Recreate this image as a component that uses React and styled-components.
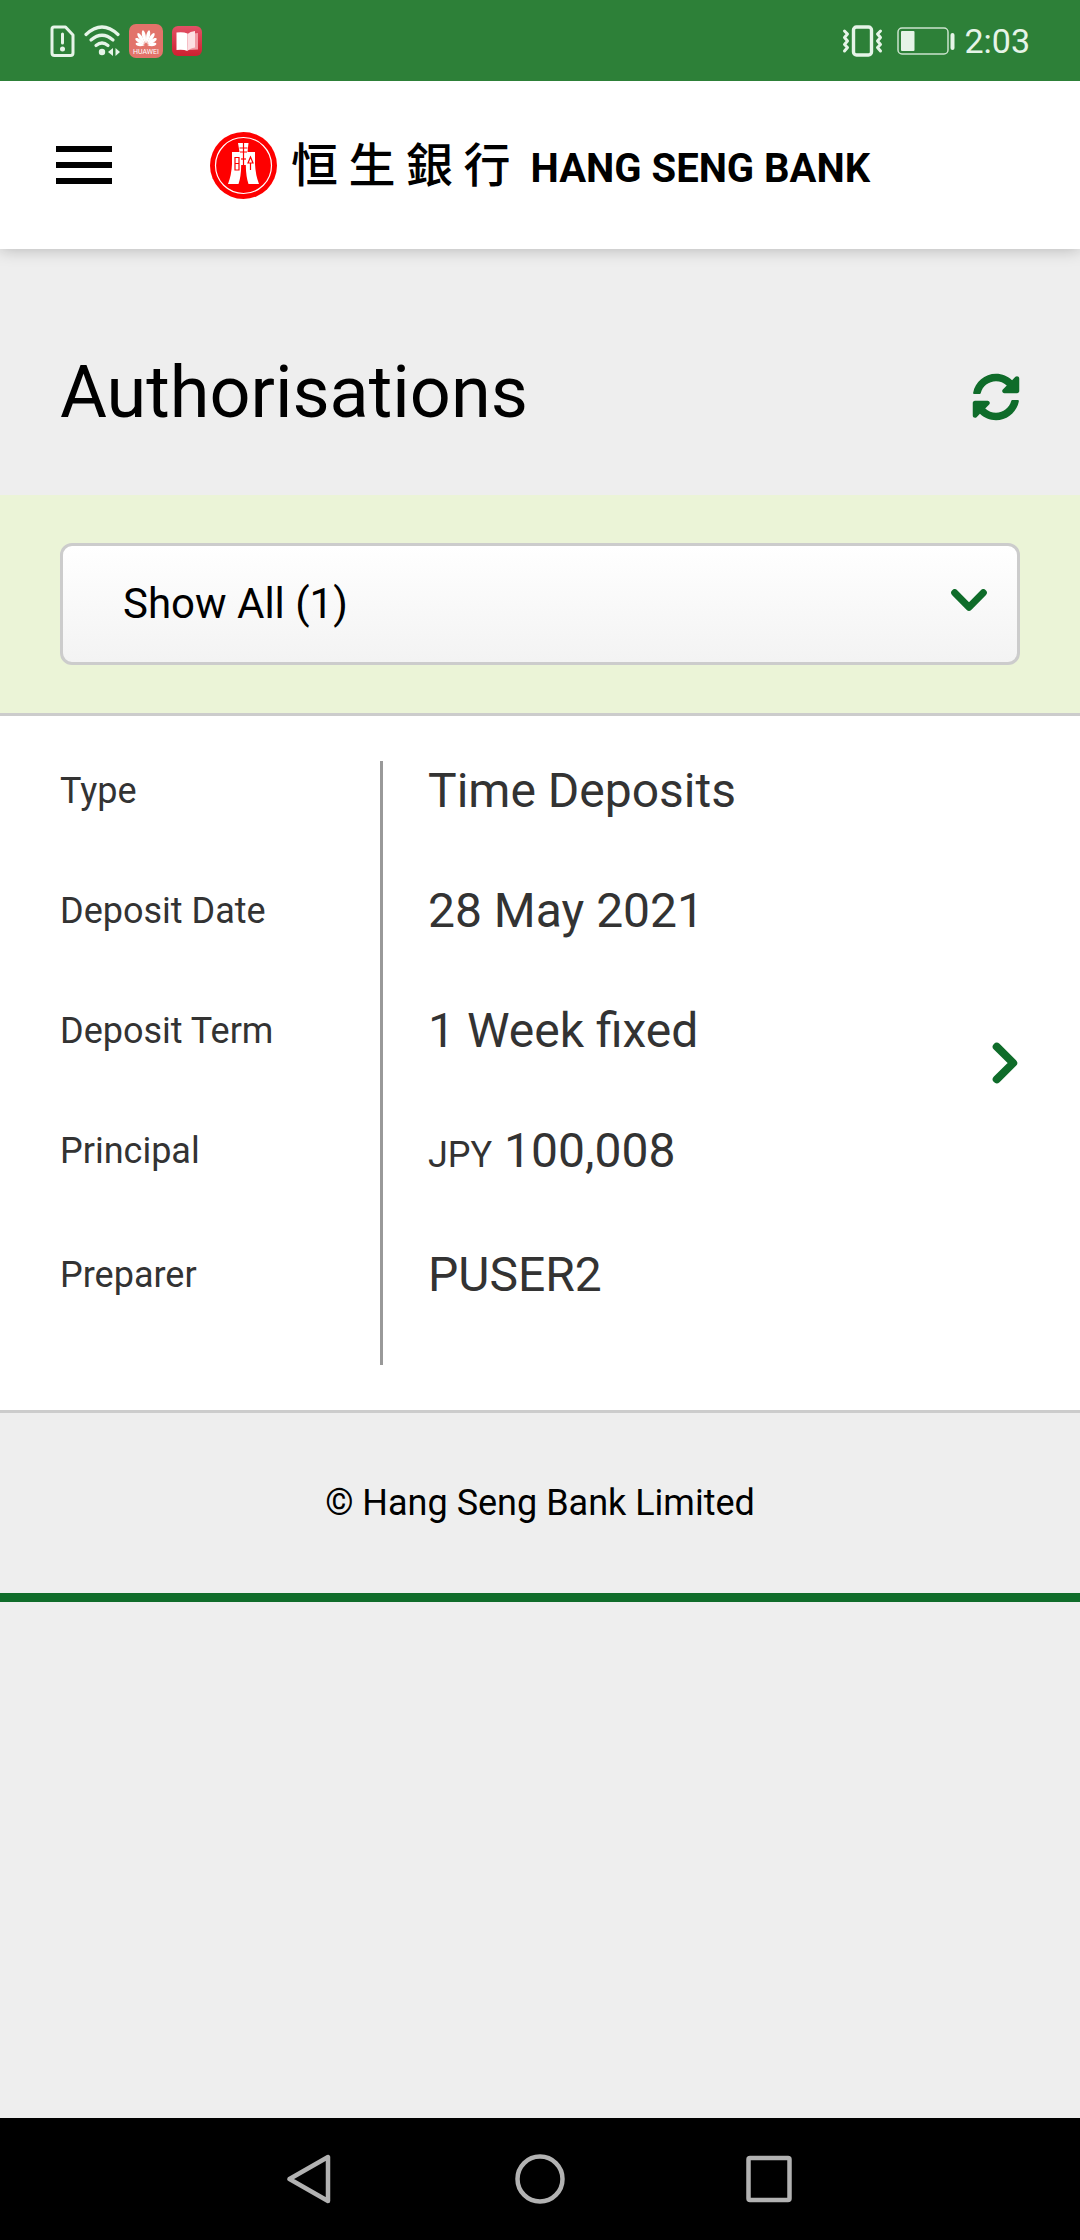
import React from "react";
import styled, { createGlobalStyle } from "styled-components";
import { FaSyncAlt } from "react-icons/fa";

const GlobalStyle = createGlobalStyle`
  *, *::before, *::after { box-sizing: border-box; }
  body {
    margin: 0;
    background: #eeeeee;
    color: #000;
    font-family: Roboto, "Noto Sans CJK TC", sans-serif;
  }
  svg { display: block; }
`;

const Screen = styled.div`
  display: flex;
  flex-direction: column;
  min-height: 100vh;
`;

const StatusBar = styled.div`
  position: relative;
  z-index: 2;
  display: flex;
  justify-content: space-between;
  align-items: center;
  height: 81px;
  padding: 0 50px;
  background: #2d8038;
  color: #e6f4e8;
`;

const StatusGroup = styled.div`
  display: flex;
  align-items: center;
  gap: 9px;
`;

const Clock = styled.time`
  font-size: 34px;
  line-height: 40px;
`;

const Header = styled.header`
  position: relative;
  z-index: 1;
  display: grid;
  grid-template-columns: 1fr auto 1fr;
  align-items: center;
  height: 168px;
  padding: 0 56px;
  background: #fff;
  box-shadow: 0 0 16px rgba(0, 0, 0, 0.26);
`;

const IconButton = styled.button`
  display: flex;
  justify-self: start;
  padding: ${(p) => p.$pad || "0"};
  border: 0;
  background: none;
  color: ${(p) => p.$color || "#000"};
  cursor: pointer;
`;

const Brand = styled.a`
  display: flex;
  align-items: center;
  gap: 14px;
  color: #000;
  text-decoration: none;
  white-space: nowrap;
`;

const Wordmark = styled.span`
  display: flex;
  align-items: baseline;
  gap: 20px;
  line-height: 60px;
`;

const BrandChinese = styled.span`
  font-family: "Noto Sans CJK TC", sans-serif;
  font-size: 47px;
  font-weight: 500;
`;

const BrandLatin = styled.span`
  font-size: 40px;
  font-weight: 700;
`;

const TitleBar = styled.div`
  display: flex;
  justify-content: space-between;
  align-items: flex-end;
  padding: 102px 60px 60px;
`;

const Title = styled.h1`
  margin: 0;
  font-size: 72px;
  line-height: 84px;
  font-weight: 400;
`;

const FilterBand = styled.div`
  padding: 48px 60px;
  background: #ebf4d7;
  border-bottom: 3px solid #ccc;
`;

const SelectBox = styled.div`
  display: grid;
  align-items: center;

  > * { grid-area: 1 / 1; }

  > svg {
    justify-self: end;
    margin: 0 33px 8px 0;
    pointer-events: none;
  }
`;

const Select = styled.select`
  appearance: none;
  width: 100%;
  padding: 32px 90px 32px 60px;
  border: 3px solid #ccc;
  border-radius: 12px;
  background: linear-gradient(#fff, #f3f3f3);
  color: #000;
  font-family: inherit;
  font-size: 42px;
  line-height: 52px;
`;

const Card = styled.a`
  display: flex;
  align-items: center;
  padding: 45px 60px;
  background: #fff;
  border-bottom: 3px solid #ccc;
  color: #333;
  text-decoration: none;
`;

const Details = styled.dl`
  flex: 1;
  margin: 0;
`;

const DetailRow = styled.div`
  display: flex;
`;

const Label = styled.dt`
  flex: 0 0 320px;
  font-size: 36px;
  line-height: 60px;
`;

const Value = styled.dd`
  flex: 1;
  margin: 0;
  padding: 0 0 ${(p) => (p.$money ? 64 : 60)}px 45px;
  border-left: 3px solid #999;
  font-size: 48px;
  line-height: 60px;
`;

const Currency = styled.span`
  font-size: 36px;
  line-height: 48px;
`;

const Footer = styled.footer`
  padding: 60px;
  border-bottom: 9px solid #0f6c2a;
  font-size: 36px;
  line-height: 60px;
  text-align: center;
`;

const NavBar = styled.nav`
  display: flex;
  justify-content: center;
  align-items: center;
  gap: 180px;
  height: 122px;
  margin-top: auto;
  background: #000;
`;

const SimIcon = () => (
  <svg width="25" height="32" viewBox="0 0 25 32" fill="none" stroke="currentColor" strokeWidth="3" strokeLinejoin="round">
    <path d="M4 2H15.500L23 10V28Q23 30.500 20.500 30.500H4.500Q2 30.500 2 28V4Q2 2 4 2Z" />
    <path d="M12.500 9V18" strokeLinecap="round" />
    <circle cx="12.500" cy="24" r="2.500" fill="currentColor" stroke="none" />
  </svg>
);

const WifiIcon = () => (
  <svg width="36" height="32" viewBox="0 0 36 32" fill="none" stroke="currentColor" strokeWidth="3.200" strokeLinecap="round">
    <path d="M2 9.500Q18 -5.500 34 9.500" />
    <path d="M7 15Q18 5.500 29 15" />
    <path d="M12 20.500Q18 15.500 24 20.500" />
    <circle cx="18" cy="27" r="3.200" fill="currentColor" stroke="none" />
    <path d="M29 23V31L24 27ZM31.500 23V31L36 27Z" fill="currentColor" stroke="none" />
  </svg>
);

const huaweiPetals = [
  { angle: -80, length: 0.7 },
  { angle: -56, length: 0.85 },
  { angle: -34, length: 0.98 },
  { angle: -12, length: 1.02 },
  { angle: 12, length: 1.02 },
  { angle: 34, length: 0.98 },
  { angle: 56, length: 0.85 },
  { angle: 80, length: 0.7 },
];

const HuaweiIcon = () => (
  <svg width="34" height="34" viewBox="0 0 34 34">
    <rect width="34" height="34" rx="7" fill="#e2736a" />
    <g fill="#fff">
      {huaweiPetals.map(({ angle, length }) => (
        <path
          key={angle}
          d="M0 -2C-2.400 -7 -2.800 -12 -1 -14.500Q0 -15.800 1 -14.500C2.800 -12 2.400 -7 0 -2Z"
          transform={`translate(17 21.500) rotate(${angle}) scale(0.850 ${length})`}
        />
      ))}
    </g>
    <text x="17" y="30" textAnchor="middle" fontSize="7" fontFamily="Roboto, sans-serif" fill="#fff">HUAWEI</text>
  </svg>
);

const BookIcon = () => (
  <svg width="30" height="30" viewBox="0 0 30 30">
    <defs>
      <linearGradient id="book-cover" x1="0" y1="0" x2="0" y2="1">
        <stop offset="0" stopColor="#e25166" />
        <stop offset="1" stopColor="#cf2030" />
      </linearGradient>
    </defs>
    <rect width="30" height="30" rx="6" fill="url(#book-cover)" />
    <path d="M17 8L26 7V23.500L15.500 24Z" fill="#f29aa4" />
    <path d="M4.500 6.500Q11 5.500 15.500 7.500V25Q11 23 4.500 24Z" fill="#fff" />
    <path d="M15.500 8Q18 5.500 23 5V21.500Q18 22 15.500 25Z" fill="#fddfe3" />
  </svg>
);

const VibrateIcon = () => (
  <svg width="46" height="32" viewBox="0 0 46 32" fill="none" stroke="currentColor" strokeWidth="3" strokeLinecap="round" strokeLinejoin="round">
    <rect x="11.500" y="2" width="18" height="28" rx="3" strokeWidth="3.400" />
    <path d="M2.500 6L5.500 9L2.500 12.500L5.500 16L2.500 19.500L5.500 22.500L2.500 26" />
    <path d="M38.500 6L35.500 9L38.500 12.500L35.500 16L38.500 19.500L35.500 22.500L38.500 26" />
  </svg>
);

const BatteryIcon = () => (
  <svg width="58" height="28" viewBox="0 0 58 28" fill="currentColor">
    <rect x="1" y="1" width="50" height="26" rx="4" fill="none" stroke="currentColor" strokeWidth="1.500" opacity="0.850" />
    <rect x="4" y="4" width="13.500" height="20" rx="1" />
    <rect x="53.500" y="6" width="4" height="17" rx="2" />
  </svg>
);

const MenuIcon = () => (
  <svg width="56" height="38" viewBox="0 0 56 38">
    <path d="M0 0H56V6H0ZM0 16H56V22H0ZM0 32H56V38H0Z" fill="currentColor" />
  </svg>
);

const BankEmblem = () => (
  <svg width="67" height="67" viewBox="0 0 67 67">
    <circle cx="33.500" cy="33.500" r="33.500" fill="#fe0000" />
    <circle cx="33.500" cy="33.500" r="28" fill="none" stroke="#fff" strokeWidth="1.200" />
    <path d="M28 11H38.500L37.500 20H45V32Q45.500 43 49 52H38.500Q36 45 35.800 33H31.200Q31 45 28.500 52H18Q21.500 43 22 32V20H29.500Z" fill="#fff" />
    <g fill="none" stroke="#fe0000" strokeWidth="1.200">
      <path d="M33.500 11V36M29.500 16H37.500M30 20H37" />
      <path d="M25 25.500H29V38H25ZM25 31.500H29" />
      <path d="M40.500 25L38 31H43L40.500 25ZM40.500 31V38" />
      <path d="M31 27H36" />
    </g>
  </svg>
);

const ChevronDown = () => (
  <svg width="36" height="22" viewBox="0 0 36 22" fill="none" stroke="#0f6c2a" strokeWidth="7" strokeLinecap="round" strokeLinejoin="round">
    <path d="M3.700 3.700L18 18.200L32.300 3.700" />
  </svg>
);

const ChevronRight = () => (
  <svg width="28" height="42" viewBox="0 0 28 42" fill="none" stroke="#0f6c2a" strokeWidth="8" strokeLinecap="round" strokeLinejoin="round">
    <path d="M4.700 4.700L21.200 21L4.700 37.300" />
  </svg>
);

const NavIcon = ({ children }) => (
  <svg width="50" height="50" viewBox="0 0 50 50" fill="none" stroke="#b2b2b2" strokeWidth="4.500" strokeLinejoin="round">
    {children}
  </svg>
);

const details = [
  { label: "Type", value: "Time Deposits" },
  { label: "Deposit Date", value: "28 May 2021" },
  { label: "Deposit Term", value: "1 Week fixed" },
  { label: "Principal", value: "100,008", currency: "JPY" },
  { label: "Preparer", value: "PUSER2" },
];

export default function App() {
  return (
    <Screen>
      <GlobalStyle />
      <StatusBar>
        <StatusGroup>
          <SimIcon />
          <WifiIcon />
          <HuaweiIcon />
          <BookIcon />
        </StatusGroup>
        <StatusGroup>
          <VibrateIcon />
          <BatteryIcon />
          <Clock>2:03</Clock>
        </StatusGroup>
      </StatusBar>

      <Header>
        <IconButton type="button" aria-label="Menu">
          <MenuIcon />
        </IconButton>
        <Brand href="#">
          <BankEmblem />
          <Wordmark>
            <BrandChinese lang="zh-Hant">恒 生 銀 行</BrandChinese>
            <BrandLatin>HANG SENG BANK</BrandLatin>
          </Wordmark>
        </Brand>
      </Header>

      <main>
        <TitleBar>
          <Title>Authorisations</Title>
          <IconButton type="button" aria-label="Refresh" $color="#0f6c2a" $pad="14px 0">
            <FaSyncAlt size={48} />
          </IconButton>
        </TitleBar>

        <FilterBand>
          <SelectBox>
            <Select aria-label="Filter authorisations" defaultValue="all">
              <option value="all">Show All (1)</option>
            </Select>
            <ChevronDown />
          </SelectBox>
        </FilterBand>

        <Card href="#">
          <Details>
            {details.map(({ label, value, currency }) => (
              <DetailRow key={label}>
                <Label>{label}</Label>
                <Value $money={Boolean(currency)}>
                  {currency && <Currency>{currency}</Currency>}
                  {currency && " "}
                  {value}
                </Value>
              </DetailRow>
            ))}
          </Details>
          <ChevronRight />
        </Card>
      </main>

      <Footer>© Hang Seng Bank Limited</Footer>

      <NavBar>
        <IconButton type="button" aria-label="Back">
          <NavIcon>
            <path d="M4.500 25L43 3V47Z" />
          </NavIcon>
        </IconButton>
        <IconButton type="button" aria-label="Home">
          <NavIcon>
            <circle cx="25" cy="25" r="22.500" />
          </NavIcon>
        </IconButton>
        <IconButton type="button" aria-label="Recent apps">
          <NavIcon>
            <rect x="3.500" y="4" width="41" height="42" rx="1.500" />
          </NavIcon>
        </IconButton>
      </NavBar>
    </Screen>
  );
}
